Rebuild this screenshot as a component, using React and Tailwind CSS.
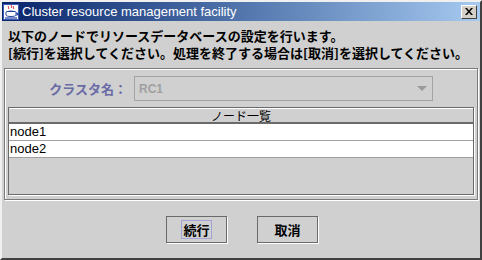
export default function App() {
  return (
    <div className="w-[482px] h-[260px] bg-[#d0d0d0] border-l-2 border-t-2 border-l-[#f0f0f0] border-t-[#f0f0f0] border-r-2 border-b-2 border-r-[#404040] border-b-[#404040] flex flex-col overflow-hidden" style={{ fontFamily: '"Liberation Sans", Arial, sans-serif' }}>
      <TitleBar />

      <div className="pl-[6px] pt-[6px] text-[13px] font-bold text-black" style={{ fontFamily: '"Noto Sans CJK JP", sans-serif' }}>
        <p className="h-[17px] leading-[17px] whitespace-nowrap">以下のノードでリソースデータベースの設定を行います。</p>
        <p className="h-[17px] leading-[17px] whitespace-nowrap">[続行]を選択してください。処理を終了する場合は[取消]を選択してください。</p>
      </div>

      {/* cluster + node list panel */}
      <div className="mx-[2px] mt-[7px] h-[132px] border border-[#7a7a7a] shadow-[inset_1px_1px_0_#ffffff,1px_1px_0_#ffffff] flex flex-col px-[2px]">
        <div className="flex items-center pt-[7px]">
          <span className="w-[127px] pr-[7px] text-right text-[13px] font-bold text-[#6a6aa6]" style={{ fontFamily: '"Noto Sans CJK JP", sans-serif' }}>
            クラスタ名：
          </span>
          <div className="w-[299px] h-[25px] border border-[#a4a4a4] flex items-center justify-between pl-[4px] pr-[5px]">
            <span className="text-[12px] font-bold text-[#a0a0a0]">RC1</span>
            <svg width="10" height="6" viewBox="0 0 10 6">
              <polygon points="0,0 10,0 5,5" fill="#9a9a9a" />
            </svg>
          </div>
        </div>

        <NodeTable />
      </div>

      <div className="flex justify-center gap-[30px] mt-[16px] pl-[2px]">
        <DialogButton label="続行" focused />
        <DialogButton label="取消" />
      </div>
    </div>
  );
}

function TitleBar() {
  return (
    <div className="h-[19px] flex items-center justify-between bg-gradient-to-r from-[#0a246a] to-[#a6caf0] pl-[1px] pr-[3px]">
      <div className="flex items-center gap-[3px]">
        <AppIcon />
        <span className="text-white text-[13px] leading-none">Cluster resource management facility</span>
      </div>
      <div className="w-[16px] h-[14px] bg-[#d4d0c8] border border-t-white border-l-white border-r-[#404040] border-b-[#404040] flex items-center justify-center">
        <svg width="8" height="7" viewBox="0 0 8 7">
          <path d="M0 0h2l2 2.5L6 0h2L5 3.5 8 7H6L4 4.5 2 7H0l3-3.5z" fill="#000" />
        </svg>
      </div>
    </div>
  );
}

function AppIcon() {
  return (
    <svg width="16" height="16" viewBox="0 0 16 16">
      <rect x="0" y="0" width="16" height="16" fill="#ffffff" />
      <rect x="0.5" y="0.5" width="15" height="15" fill="none" stroke="#3a5ab8" />
      <path d="M5 2c1 1 0 2 1 3M8 1c1 1 0 2 1 3M10 2c1 1 0 2 1 3" stroke="#d02020" fill="none" strokeWidth="1" />
      <ellipse cx="8" cy="8" rx="5" ry="1.5" fill="#2040a0" />
      <path d="M3 8v3c0 2 10 2 10 0V8" fill="#ffffff" stroke="#2040a0" />
      <path d="M13 9h1.5v2H13" fill="none" stroke="#2040a0" />
      <path d="M2 14h12" stroke="#2040a0" strokeWidth="1.2" />
    </svg>
  );
}

function NodeTable() {
  const nodes = ["node1", "node2"];
  return (
    <div className="mt-[6px] mx-[1px] h-[88px] border border-[#6a6a6a] shadow-[1px_1px_0_#ffffff] flex flex-col">
      <div className="h-[16px] border-t border-t-white border-b-2 border-b-[#6a6a6a] flex items-center justify-center text-[12px] text-black" style={{ fontFamily: '"Noto Sans CJK JP", sans-serif' }}>
        ノード一覧
      </div>
      {nodes.map((n) => (
        <div key={n} className="h-[17px] bg-white border-b border-[#a0a0a0] pl-[1px] flex items-center text-[13px] text-black">
          {n}
        </div>
      ))}
    </div>
  );
}

function DialogButton({ label, focused }) {
  return (
    <button className="w-[61px] h-[27px] border border-[#6a6a6a] shadow-[1px_1px_0_#ffffff] bg-[#d0d0d0] flex items-center justify-center">
      <span
        className={`px-[1px] text-[13px] font-bold text-black leading-[17px] ${focused ? "outline outline-1 outline-[#a3a3d6]" : ""}`}
        style={{ fontFamily: '"Noto Sans CJK JP", sans-serif' }}
      >
        {label}
      </span>
    </button>
  );
}
